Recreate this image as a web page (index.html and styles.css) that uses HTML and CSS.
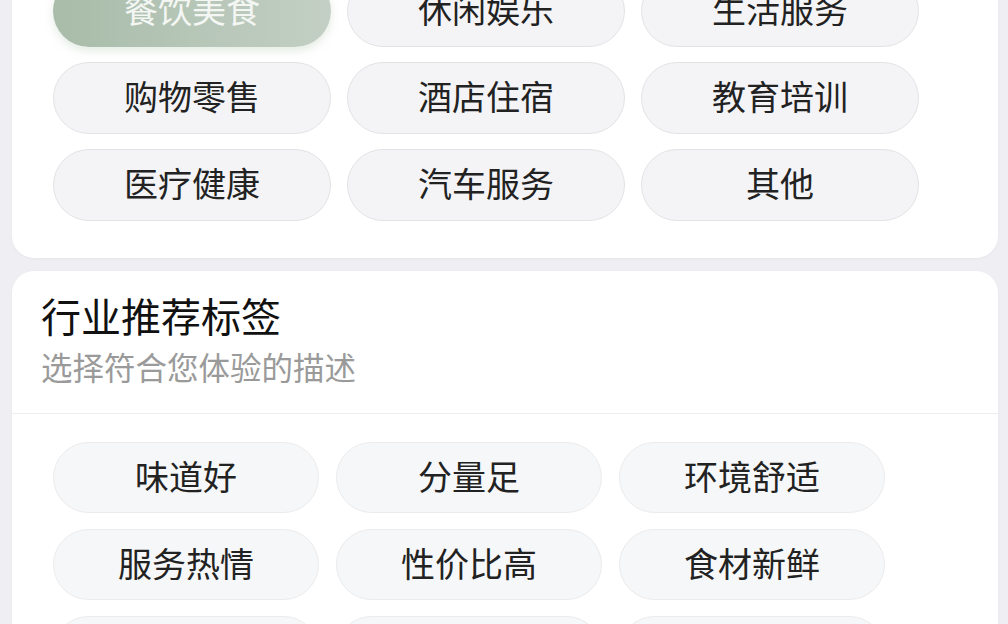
FILE: index.html
```html
<!DOCTYPE html>
<html lang="zh-CN">
<head>
<meta charset="utf-8">
<title>行业选择</title>
<link rel="stylesheet" href="styles.css">
</head>
<body>
<div class="page">
  <section class="card industry-card">
    <div class="industry-grid">
      <button class="pill pill-selected">餐饮美食</button>
      <button class="pill">休闲娱乐</button>
      <button class="pill">生活服务</button>
      <button class="pill">购物零售</button>
      <button class="pill">酒店住宿</button>
      <button class="pill">教育培训</button>
      <button class="pill">医疗健康</button>
      <button class="pill">汽车服务</button>
      <button class="pill">其他</button>
    </div>
  </section>

  <section class="card tags-card">
    <header class="card-header">
      <h2 class="card-title">行业推荐标签</h2>
      <p class="card-sub">选择符合您体验的描述</p>
    </header>
    <div class="tag-grid">
      <button class="tag">味道好</button>
      <button class="tag">分量足</button>
      <button class="tag">环境舒适</button>
      <button class="tag">服务热情</button>
      <button class="tag">性价比高</button>
      <button class="tag">食材新鲜</button>
      <button class="tag">上菜快</button>
      <button class="tag">干净卫生</button>
      <button class="tag">停车方便</button>
    </div>
  </section>
</div>
</body>
</html>
```

FILE: styles.css
```css
* { box-sizing: border-box; }

html, body {
  margin: 0;
  padding: 0;
  background: #efeff3;
  font-family: "Noto Sans CJK SC", "Noto Sans", sans-serif;
  overflow: hidden;
}

.page {
  margin-top: -62px;
  padding: 0 10px 0 12px;
  display: flex;
  flex-direction: column;
  gap: 13px;
}

.card {
  background: #ffffff;
  border-radius: 22px;
  box-shadow: 0 1px 3px rgba(0, 0, 0, 0.04);
}

.industry-card {
  padding: 37px 41px 37px 41px;
}

.industry-grid {
  display: grid;
  grid-template-columns: repeat(3, 278px);
  column-gap: 16px;
  row-gap: 15px;
}

.pill {
  height: 72px;
  border-radius: 36px;
  border: 1.5px solid #e3e3e6;
  background: #f4f4f6;
  color: #222222;
  font-family: inherit;
  font-size: 34px;
  font-weight: 400;
  line-height: 1;
  padding: 0 0 4px;
  display: flex;
  align-items: center;
  justify-content: center;
}

.pill-selected {
  border: none;
  background: linear-gradient(90deg, #a8bca9 0%, #c3cfc4 100%);
  color: #f3f6f3;
  box-shadow: 0 4px 10px rgba(150, 180, 150, 0.25);
}

.tags-card {
  padding: 0;
  overflow: hidden;
}

.card-header {
  padding: 20px 29px 27px;
  border-bottom: 1.5px solid #eeeeef;
}

.card-title {
  margin: 0;
  font-size: 40px;
  line-height: 48px;
  font-weight: 400;
  color: #111111;
}

.card-sub {
  margin: 7px 0 0;
  font-size: 31.5px;
  line-height: 40px;
  color: #9a9a9a;
}

.tag-grid {
  padding: 28px 41px 40px;
  display: grid;
  grid-template-columns: repeat(3, 266px);
  column-gap: 17px;
  row-gap: 16px;
}

.tag {
  height: 71px;
  border-radius: 36px;
  border: 1.5px solid #ebebec;
  background: #f6f7f8;
  color: #222222;
  font-family: inherit;
  font-size: 34px;
  font-weight: 400;
  line-height: 1;
  padding: 0 0 4px;
  display: flex;
  align-items: center;
  justify-content: center;
}
```
